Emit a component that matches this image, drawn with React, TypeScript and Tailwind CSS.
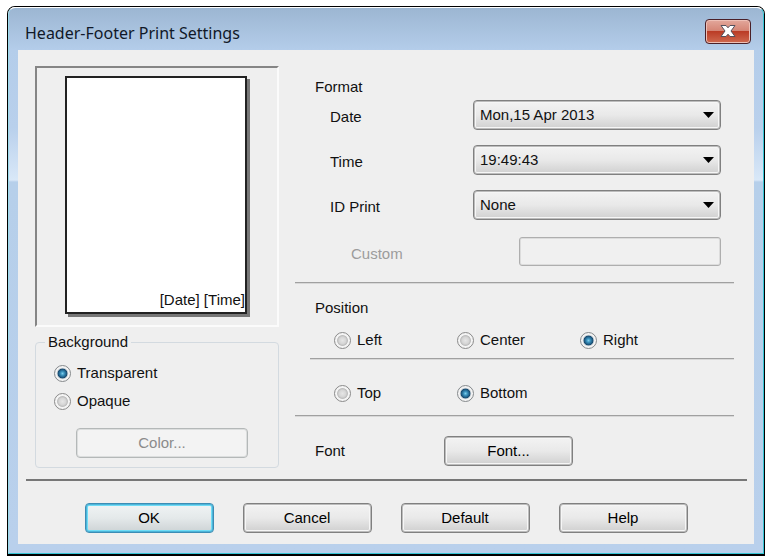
import { FC, ReactNode } from "react";

const Divider: FC<{ className?: string }> = ({ className = "" }) => (
  <hr className={`h-[2px] border-t border-b border-t-[#a0a0a0] border-b-[#d8d8d8] ${className}`} />
);

type ButtonProps = { children: ReactNode; className?: string; primary?: boolean; disabled?: boolean };

const DialogButton: FC<ButtonProps> = ({ children, className = "w-[129px]", primary, disabled }) => {
  let look =
    "border-[#808080] bg-linear-to-b from-[#f3f3f3] from-0% via-[#e9e9e9] via-50% to-[#cfcfcf] text-black shadow-[inset_0_0_0_1px_#bcbcbc,inset_0_0_0_2px_#f6f6f6]";
  if (primary)
    look =
      "border-[#3c8db5] bg-linear-to-b from-[#f0f4f5] from-0% via-[#e4e9ea] via-50% to-[#cdd3d5] text-black shadow-[inset_0_0_0_1px_#4db4d8,inset_0_0_0_2px_#6fdcf6]";
  if (disabled) look = "border-[#b4b8b8] bg-[#f3f3f3] text-[#8b8b8b] shadow-[inset_0_0_0_1px_#dcdede]";
  return (
    <button
      type="button"
      disabled={disabled}
      className={`h-[30px] rounded-[4px] border text-center leading-[20px] ${look} ${className}`}
    >
      {children}
    </button>
  );
};

type RadioProps = { name: string; label: string; checked?: boolean };

const Radio: FC<RadioProps> = ({ name, label, checked }) => (
  <label className="flex h-5 items-center gap-[6px]">
    <input
      type="radio"
      name={name}
      defaultChecked={checked}
      className="size-[17px] shrink-0 appearance-none rounded-full border border-[#8a8a8a] bg-[radial-gradient(circle_closest-side,#e6e6e6_0%,#d6d6d6_45%,#bdbdbd_66%,#f4f4f4_78%)] checked:border-[#85898c] checked:bg-[radial-gradient(circle_closest-side,#7fcdea_0%,#3a93bf_25%,#174a70_60%,#c3ccd2_70%,#f4f4f4_82%)]"
    />
    {label}
  </label>
);

const SelectRow: FC<{ id: string; label: string; value: string }> = ({ id, label, value }) => (
  <div className="flex items-center">
    <label htmlFor={id} className="flex-1 pt-1">
      {label}
    </label>
    <div className="relative w-[248px]">
      <select
        id={id}
        className="block h-[30px] w-full appearance-none rounded-[4px] border border-[#808080] bg-linear-to-b from-[#f3f3f3] from-0% via-[#e9e9e9] via-50% to-[#cfcfcf] pl-[6px] leading-[20px] shadow-[inset_0_0_0_1px_#bcbcbc,inset_0_0_0_2px_#f6f6f6]"
      >
        <option>{value}</option>
      </select>
      <svg className="pointer-events-none absolute top-3 right-[7px]" width="11" height="6" viewBox="0 0 11 6">
        <path d="M0 0h11L5.5 6z" fill="#000" />
      </svg>
    </div>
  </div>
);

const Preview: FC = () => (
  <div className="flex h-[261px] justify-center border-2 border-t-[#858585] border-r-[#fbfbfb] border-b-[#fbfbfb] border-l-[#858585] pt-2 pr-[2px]">
    <div className="flex h-[238px] w-[182px] items-end justify-end border-2 border-[#222] bg-white pb-[2px] shadow-[3px_3px_0_#777]">
      [Date] [Time]
    </div>
  </div>
);

const App: FC = () => (
  <main className="bg-white pt-[6px] pr-[3px] pl-[7px] font-['Liberation_Sans',Arial,sans-serif] text-[15px] leading-[20px] text-[#111]">
    <section className="rounded-t-[8px] border border-b-2 border-black">
      <div className="rounded-t-[7px] border border-t-white border-r-[#35c5d5] border-b-[#35c5d5] border-l-[#9bdcec] bg-[linear-gradient(to_bottom,#9cb6d2_0,#b4cdea_42px,#b9d0ec_120px,#d9e8f8_172px,#b6cfea_174px,#b9d0ec_100%)] px-[9px] pb-[9px]">
        <header className="flex h-[42px] items-center justify-between pr-[3px] pl-[7px]">
          <h1 className="pt-[8px] font-['Noto_Sans','Open_Sans',sans-serif] text-[16px] leading-[22px] text-[#101828]">
            Header-Footer Print Settings
          </h1>
          <button
            type="button"
            aria-label="Close"
            className="mt-1 flex h-[25px] w-[46px] items-center justify-center rounded-[4px] border border-[#4a2028] bg-[linear-gradient(to_bottom,#e3a89c_0,#d48474_48%,#bb3c26_50%,#cf6a50_100%)] shadow-[inset_0_0_0_1px_#eec0b6]"
          >
            <svg width="16" height="12" viewBox="0 0 16 12">
              <path
                d="M1 .5h5L8 2.800 10 .5H15L11 6 15 11.500h-5L8 9.200 6 11.500H1L5 6z"
                fill="#fff"
                stroke="#54505c"
              />
            </svg>
          </button>
        </header>

        <form className="bg-[#efefef] pt-4 pb-[11px]">
          <div className="flex gap-4 pr-5 pl-[17px]">
            <div className="w-[244px]">
              <Preview />
              <fieldset className="mt-[5px] h-[136px] rounded-[4px] border border-[#d3dae0] pl-[18px]">
                <legend className="-ml-[9px] px-[3px]">Background</legend>
                <div className="mt-[11px] flex flex-col gap-2">
                  <Radio name="background" label="Transparent" checked />
                  <Radio name="background" label="Opaque" />
                </div>
                <DialogButton disabled className="mt-[17px] ml-[22px] w-[172px]">
                  Color...
                </DialogButton>
              </fieldset>
            </div>

            <div className="flex-1">
              <h2 className="pt-[11px] pl-5">Format</h2>
              <div className="mt-[3px] flex flex-col gap-[15px] pr-[13px] pl-[35px]">
                <SelectRow id="date" label="Date" value="Mon,15 Apr 2013" />
                <SelectRow id="time" label="Time" value="19:49:43" />
                <SelectRow id="id-print" label="ID Print" value="None" />
                <div className="flex items-center pt-[2px] pl-[21px]">
                  <label htmlFor="custom" className="flex-1 pt-1 text-[#9c9c9c]">
                    Custom
                  </label>
                  <input
                    id="custom"
                    type="text"
                    disabled
                    className="h-[29px] w-[202px] rounded-[3px] border border-[#aeaeae] bg-[#f0f0f0] shadow-[inset_0_0_0_1px_#dcdcdc]"
                  />
                </div>
              </div>

              <Divider className="mt-4" />
              <h2 className="mt-[14px] pl-5">Position</h2>
              <div className="mt-3 grid grid-cols-[repeat(3,123px)] pl-[39px]">
                <Radio name="horizontal" label="Left" />
                <Radio name="horizontal" label="Center" />
                <Radio name="horizontal" label="Right" checked />
              </div>
              <Divider className="mt-2 ml-[15px]" />
              <div className="mt-[23px] grid grid-cols-[repeat(3,123px)] pl-[39px]">
                <Radio name="vertical" label="Top" />
                <Radio name="vertical" label="Bottom" checked />
              </div>

              <Divider className="mt-3" />
              <div className="mt-[19px] flex items-center pl-5">
                <h2 className="w-[129px]">Font</h2>
                <DialogButton>Font...</DialogButton>
              </div>
            </div>
          </div>

          <hr className="mt-[11px] mr-[7px] ml-2 border-t-2 border-[#777]" />
          <footer className="mt-[22px] flex justify-center gap-[29px]">
            <DialogButton primary>OK</DialogButton>
            <DialogButton>Cancel</DialogButton>
            <DialogButton>Default</DialogButton>
            <DialogButton>Help</DialogButton>
          </footer>
        </form>
      </div>
    </section>
  </main>
);

export default App;
